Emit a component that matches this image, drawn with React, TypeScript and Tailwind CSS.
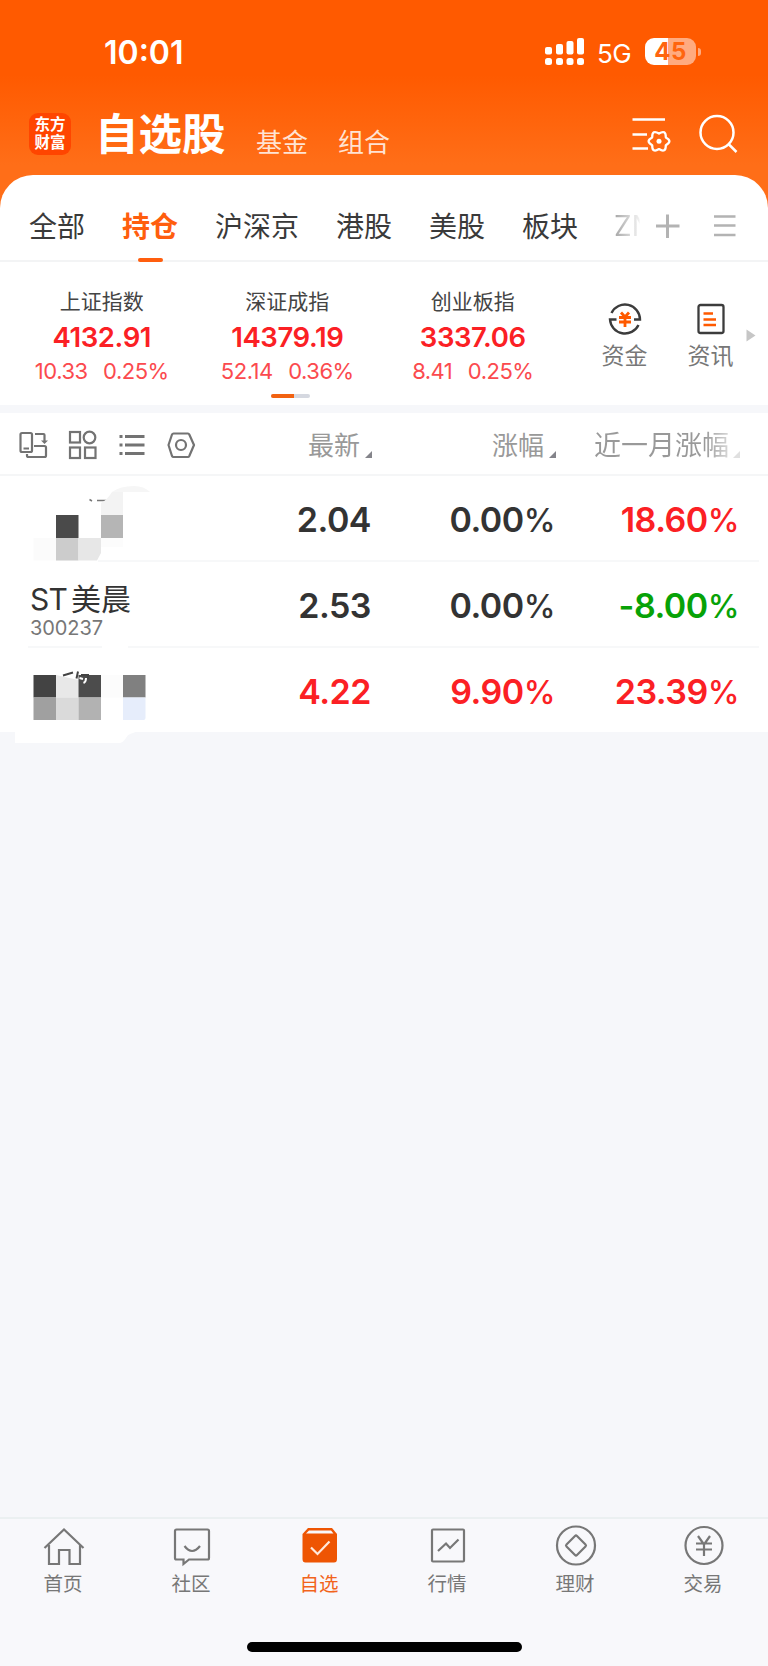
import type { ReactNode } from "react";
import clsx from "clsx";

const tabs = ["全部", "持仓", "沪深京", "港股", "美股", "板块"];

const indices = [
  { name: "上证指数", value: "4132.91", change: "10.33", percent: "0.25%" },
  { name: "深证成指", value: "14379.19", change: "52.14", percent: "0.36%" },
  { name: "创业板指", value: "3337.06", change: "8.41", percent: "0.25%" },
];

const RED = "text-[#fb2024]";
const DARK = "text-[#333333]";
const GREEN = "text-[#07a207]";

const StatusBar = () => (
  <div className="flex h-[104px] items-start text-white">
    <div className="ml-[104px] mt-[34px] w-[80px] text-[32px] leading-[38px] font-semibold">10:01</div>
    <svg className="ml-[361px] mt-[38px]" width="39" height="27" fill="currentColor">
      <rect x="0" y="9" width="7" height="7.500" rx="2" />
      <rect x="11" y="6" width="7" height="10.500" rx="2" />
      <rect x="21.500" y="3" width="7" height="13.500" rx="2" />
      <rect x="32" y="0" width="7" height="16.500" rx="2" />
      <rect x="0" y="20" width="7" height="7" rx="2.500" />
      <rect x="11" y="20" width="7" height="7" rx="2.500" />
      <rect x="21.500" y="20" width="7" height="7" rx="2.500" />
      <rect x="32" y="20" width="7" height="7" rx="2.500" />
    </svg>
    <div className="ml-[13px] mt-[37px] w-[36px] text-[26px] leading-[33px] tracking-[-0.5px]">5G</div>
    <div className="ml-[12px] mt-[38px] flex h-[27px] w-[51px] items-center justify-center rounded-[9px] bg-[linear-gradient(90deg,#fff_45%,#ffab80_45%)] text-[24px] leading-[27px] font-bold tracking-[0.5px] text-[#ff650f]">
      45
    </div>
    <div className="ml-[2px] mt-[48px] h-[8px] w-[3px] rounded-r-full bg-[#ffab80]" />
  </div>
);

const TitleBar = () => (
  <div className="flex h-[71px] items-start text-white">
    <div className="ml-[29px] mt-[9px] flex h-[42px] w-[42px] flex-col items-center justify-center rounded-[9px] bg-[#ff4500] text-[15.5px] leading-[18px] font-bold">
      <span>东方</span>
      <span>财富</span>
    </div>
    <div className="ml-[24px] w-[133px] text-[43.500px] leading-[60px] font-bold">自选股</div>
    <div className="ml-[28px] mt-[21px] w-[54px] text-[26px] leading-[36px] text-[#ffe3d3]">基金</div>
    <div className="ml-[28px] mt-[21px] w-[54px] text-[26px] leading-[36px] text-[#ffe3d3]">组合</div>
    <svg className="ml-[240px] mt-[12px]" width="40" height="40" fill="none" stroke="currentColor" strokeWidth="2.500">
      <path d="M0.500 3.500H33M0.500 18.500H15M0.500 32.500H16" />
      <path
        d="M27 17.500Q34 13.200 33.800 21.400Q41 25.300 33.800 29.200Q34 37.400 27 33.100Q20 37.400 20.200 29.200Q13 25.300 20.200 21.400Q20 13.200 27 17.500Z"
        strokeWidth="2.300"
        strokeLinejoin="round"
      />
      <circle cx="27" cy="25.300" r="2.500" fill="currentColor" stroke="none" />
    </svg>
    <svg className="ml-[27px] mt-[9px]" width="40" height="42" fill="none" stroke="currentColor" strokeWidth="2.500">
      <circle cx="18" cy="19.500" r="16.500" />
      <path d="M29.500 31L37.500 39" />
    </svg>
  </div>
);

const TabBar = () => (
  <div className="flex h-[87px] items-start border-b-2 border-[#f3f4f5] pl-[29px]">
    <div className="flex gap-[37px]">
      {tabs.map((tab, i) => (
        <div
          key={tab}
          className={clsx(
            "flex h-[87px] flex-col items-center pt-[32px] text-[28px] leading-[40px]",
            i === 1 ? "font-bold text-[#ff5e0e]" : "text-[#3a3a3a]",
          )}
        >
          {tab}
          {i === 1 && <i className="mt-[11px] h-[4px] w-[25px] rounded-[2px] bg-[#ff5e0e]" />}
        </div>
      ))}
    </div>
    <div className="ml-[36px] mt-[31px] w-[41px] bg-[linear-gradient(90deg,#a5a5a5_0px,#f0f0f0_25px,transparent_26px)] bg-clip-text text-[28px] leading-[40px] text-transparent">
      ZN
    </div>
    <svg className="mt-[38px]" width="26" height="26" stroke="#b3b3b3" strokeWidth="3">
      <path d="M1 13H24.500M12.500 1.500V25" />
    </svg>
    <svg className="ml-[33px] mt-[38px]" width="22" height="26" stroke="#b3b3b3" strokeWidth="2.700">
      <path d="M0 3.500H21.500M0 12.500H21.500M0 22H21.500" />
    </svg>
  </div>
);

const Shortcut = ({ label, children }: { label: string; children: ReactNode }) => (
  <div className="flex w-[86px] flex-col items-center">
    {children}
    <span className="mt-[3px] text-[23px] leading-[34px] text-[#777777]">{label}</span>
  </div>
);

const IndexStrip = () => (
  <div className="h-[143px]">
    <div className="flex h-[132px] pl-[9px]">
      {indices.map((item) => (
        <div key={item.name} className="flex w-[185.500px] flex-col items-center pt-[25px]">
          <span className="text-[21px] leading-[30px] text-[#444444]">{item.name}</span>
          <span className={clsx("mt-[3px] text-[27.500px] leading-[34px] font-semibold tracking-[-0.4px]", RED)}>{item.value}</span>
          <span className="mt-[3px] flex gap-[15.500px] text-[22px] leading-[28px] tracking-[-0.5px] text-[#fb4a4e]">
            <span>{item.change}</span>
            <span>{item.percent}</span>
          </span>
        </div>
      ))}
      <div className="ml-[16px] flex pt-[40px]">
        <Shortcut label="资金">
          <svg width="34" height="34" fill="none" stroke="#3c3c3c" strokeWidth="2.400">
            <path d="M3.500 11A15 15 0 0 1 32 17.500H26M30.500 23A15 15 0 0 1 2 17.500H8.500" />
            <path d="M13 10.500L17 15L21 10.500M11 15.500H23M11 20H23M17 15V25" stroke="#ff5a00" strokeWidth="2.800" />
          </svg>
        </Shortcut>
        <Shortcut label="资讯">
          <svg width="34" height="34" fill="none" stroke="#3c3c3c" strokeWidth="2.300">
            <rect x="4.500" y="3" width="25" height="28" rx="2" />
            <path d="M9.500 11.500H19M9.500 17.500H22M9.500 23H22" stroke="#ff5a00" strokeWidth="2.500" />
          </svg>
        </Shortcut>
      </div>
      <svg className="-ml-[8px] mt-[67px]" width="10" height="13">
        <path d="M0.500 0.500L9.500 6.500L0.500 12.500Z" fill="#c6c6c6" />
      </svg>
    </div>
    <div className="ml-[271px] flex h-[4px] w-[39px] overflow-hidden rounded-[2px] bg-[#d5d8e0]">
      <i className="w-[23px] bg-[#f26211]" />
    </div>
  </div>
);

const SortMark = ({ faded = false }: { faded?: boolean }) => (
  <svg width="7" height="7" className="mt-[25px]">
    <path d="M7 0V7H0Z" fill={faded ? "#e0e0e0" : "#84848a"} />
  </svg>
);

const TableHeader = () => (
  <div className="flex h-[63px] items-start border-b-2 border-[#f5f6f7] pt-[13px]">
    <svg className="ml-[18px] mt-[4px]" width="178" height="32" fill="none" stroke="#737373" strokeWidth="2.200">
      {/* rotate device */}
      <rect x="2.500" y="3" width="11.500" height="19" rx="1.500" />
      <path d="M5.500 18.500H11M17 4H25.500Q26.500 4 26.500 5V11M9 24V25.500Q9 27 10.500 27H26.500Q28 27 28 25.500V17.500Q28 16 26.500 16H16" />
      <path d="M23 10.500H30L26.500 14Z" fill="#737373" stroke="none" />
      {/* grid */}
      <rect x="52" y="2" width="10" height="10.500" />
      <circle cx="71.500" cy="7.500" r="5.800" />
      <rect x="52" y="17.500" width="10" height="10.500" />
      <rect x="67" y="17.500" width="10.500" height="10.500" />
      {/* list */}
      <path d="M107 6.500H126.500M107 15H126.500M107 23.500H126.500" strokeWidth="2.800" />
      <path d="M101.500 6.500H104.500M101.500 15H104.500M101.500 23.500H104.500" strokeWidth="3" />
      {/* settings */}
      <path d="M155.500 3.500H170Q170.800 3.500 171.300 4.500L176 15L171.300 26Q170.800 27 170 27H155.500Q154.500 27 154 26L150.500 15L154 4.500Q154.500 3.500 155.500 3.500Z" strokeLinejoin="round" />
      <circle cx="163" cy="15" r="5" />
    </svg>
    <div className="flex w-[176px] justify-end gap-[5px] text-[26px] leading-[40px] text-[#999999]">
      最新
      <SortMark />
    </div>
    <div className="flex w-[184px] justify-end gap-[5px] text-[26px] leading-[40px] text-[#999999]">
      涨幅
      <SortMark />
    </div>
    <div className="flex w-[184px] justify-end gap-[4px] text-[27px] leading-[40px] text-[#999999]">
      <span className="bg-[linear-gradient(90deg,#999_82%,#d8d8d8)] bg-clip-text text-transparent">近一月涨幅</span>
      <SortMark faded />
    </div>
  </div>
);

const MaskedFirst = () => (
  <svg className="block overflow-visible" width="184" height="86">
    <path d="M112 16Q120 10 134 10Q144 10 150 16Z" fill="#f6f6f6" />
    <path d="M89.500 23.500L92 25M97 24.500H111" stroke="#777777" strokeWidth="1.500" />
    <path d="M112 16H123V39H101V27Q107 24 112 16Z" fill="#f3f3f3" />
    <rect x="56" y="39" width="22.500" height="23" fill="#4a4a4a" />
    <rect x="101" y="39" width="22" height="23" fill="#b5b5b5" />
    <rect x="33.500" y="62" width="22.500" height="22.500" fill="#fbfbfb" />
    <rect x="56" y="62" width="22.500" height="22.500" fill="#cccccc" />
    <path d="M78.500 62H101V77L97 84.500H78.500Z" fill="#e7e7e7" />
    <rect x="101" y="62" width="22" height="9" fill="#fcfcfc" />
  </svg>
);

const MaskedLast = () => (
  <svg className="relative block overflow-visible" width="184" height="86">
    <path d="M15 80H145L133 85Q128 86 126 90Q123 95 119 95H15Z" fill="white" />
    <rect x="33.500" y="27" width="22.500" height="22.500" fill="#434343" />
    <path d="M56 27L78.500 32V49.500H56Z" fill="#e8e8e8" />
    <rect x="78.500" y="27" width="22.500" height="22.500" fill="#4c4c4c" />
    <rect x="101" y="27" width="22" height="22.500" fill="#fcfcfc" />
    <rect x="123" y="27" width="22.500" height="22.500" fill="#808080" />
    <rect x="33.500" y="49.500" width="22.500" height="22.500" fill="#a0a0a0" />
    <rect x="56" y="49.500" width="22.500" height="22.500" fill="#dadada" />
    <rect x="78.500" y="49.500" width="22.500" height="22.500" fill="#b2b2b2" />
    <path d="M123 49.500H145.500V70Q145.500 72 143.500 72H123Z" fill="#e6edfb" />
    <path d="M63 27.500L73 24.500M78 23.500L76.500 30.500M81 27H88V31" stroke="#444444" strokeWidth="2" fill="none" />
    <path d="M79.500 30L83 31M86 30Q86 34 83.500 35" stroke="white" strokeWidth="2" fill="none" />
  </svg>
);

const StockName = () => (
  <div className="pl-[30px] pt-[17px]">
    <div className="flex h-[36px] gap-[4px] leading-[40px] text-[#333333]">
      <span className="text-[30px] tracking-[-0.8px]">ST</span>
      <span className="text-[30px]">美晨</span>
    </div>
    <div className="text-[20px] leading-[26px] tracking-[-0.1px] text-[#777777]">300237</div>
  </div>
);

const rows = [
  { name: <MaskedFirst />, cells: ["2.04", "0.00%", "18.60%"], colors: [DARK, DARK, RED], line: "ml-[98px] bg-[#f7f8f9]" },
  {
    name: <StockName />,
    cells: ["2.53", "0.00%", "-8.00%"],
    colors: [DARK, DARK, GREEN],
    line: "ml-[28px] bg-[linear-gradient(90deg,#f7f8f9_74px,#fff_74px,#fff_100px,#f7f8f9_100px)]",
  },
  { name: <MaskedLast />, cells: ["4.22", "9.90%", "23.39%"], colors: [RED, RED, RED], line: "hidden" },
];

// the percent sign is set a little lighter and narrower than the digits
const Cell = ({ text, color }: { text: string; color: string }) => (
  <div className={clsx("w-[184px] pt-[20px] text-right text-[34px] leading-[48px] font-semibold tracking-[-0.5px]", color)}>
    {text.replace("%", "")}
    {text.endsWith("%") && <span className="text-[32px] font-medium">%</span>}
  </div>
);

const StockTable = () => (
  <div className="h-[256px] bg-white">
    {rows.map((row) => (
      <div key={row.cells[0]} className="h-[86px]">
        <div className="flex h-[84px]">
          <div className="h-[84px] w-[187px]">{row.name}</div>
          {row.cells.map((cell, i) => (
            <Cell key={i} text={cell} color={row.colors[i]} />
          ))}
        </div>
        <div className={clsx("mr-[9px] h-[2px]", row.line)} />
      </div>
    ))}
  </div>
);

const navItems: { label: string; icon: ReactNode }[] = [
  {
    label: "首页",
    icon: <path d="M0.500 22L20 3.500L39.500 22M5 19V38H15V24H25.500V38H36V19" />,
  },
  {
    label: "社区",
    icon: <path d="M4.500 3.500H35.500Q37 3.500 37 5V32Q37 33.500 35.500 33.500H17L11.500 38V33.500H4.500Q3 33.500 3 32V5Q3 3.500 4.500 3.500ZM12.500 20Q20 30 28 20" />,
  },
  {
    label: "自选",
    icon: (
      <>
        <path d="M8 2H32L37 8V33Q37 36.500 34 36.500H5.500Q2.500 36.500 2.500 33V8Z" fill="#ee5503" stroke="none" />
        <path d="M9 4.500H31L33.500 7.500H6Z" fill="#f8f8fb" stroke="none" />
        <path d="M11 21.500L17.500 28L29.500 15.500" stroke="#ffe9dc" />
      </>
    ),
  },
  {
    label: "行情",
    icon: (
      <>
        <rect x="4" y="3.500" width="32" height="32" rx="1" />
        <path d="M10 25L18 17.500L22 22L30.500 13.500" />
      </>
    ),
  },
  {
    label: "理财",
    icon: (
      <>
        <circle cx="20" cy="19.500" r="19" />
        <path d="M19 10Q20 9 21 10L29.500 18.500Q30.500 19.500 29.500 20.500L21 29Q20 30 19 29L10.500 20.500Q9.500 19.500 10.500 18.500Z" />
      </>
    ),
  },
  {
    label: "交易",
    icon: (
      <>
        <circle cx="20" cy="19.500" r="18.500" />
        <path d="M14 10L20 18.500L26 10M12 17.500H28M12 23.500H28M20 18V30" />
      </>
    ),
  },
];

const BottomNav = () => (
  <div className="flex h-[149px] flex-col items-center border-t-2 border-[#ebf0f1] bg-[#f8f8fb]">
    <div className="flex w-full">
      {navItems.map((item) => (
        <div
          key={item.label}
          className={clsx(
            "flex w-[128px] flex-col items-center pt-[7px]",
            item.label === "自选" ? "text-[#f2641b]" : "text-[#777777]",
          )}
        >
          <svg className="overflow-visible" width="40" height="40" fill="none" stroke="currentColor" strokeWidth="2.200">
            {item.icon}
          </svg>
          <span className="mr-[2px] mt-[4px] text-[19.500px] leading-[28px]">{item.label}</span>
        </div>
      ))}
    </div>
    <div className="mt-[44px] h-[10px] w-[275px] rounded-full bg-black" />
  </div>
);

export default function App() {
  return (
    <div className="flex h-[1666px] w-[768px] flex-col overflow-hidden bg-[#f6f7fa] font-[Inter,'Noto_Sans_CJK_SC',sans-serif]">
      <div className="bg-[linear-gradient(180deg,#ff5a00_0px,#ff5a00_75px,#ff6e18_165px)]">
        <StatusBar />
        <TitleBar />
        <div className="rounded-t-[33px] bg-white">
          <TabBar />
          <IndexStrip />
        </div>
      </div>
      <div className="mt-[8px] bg-white">
        <TableHeader />
        <StockTable />
      </div>
      <div className="grow" />
      <BottomNav />
    </div>
  );
}
